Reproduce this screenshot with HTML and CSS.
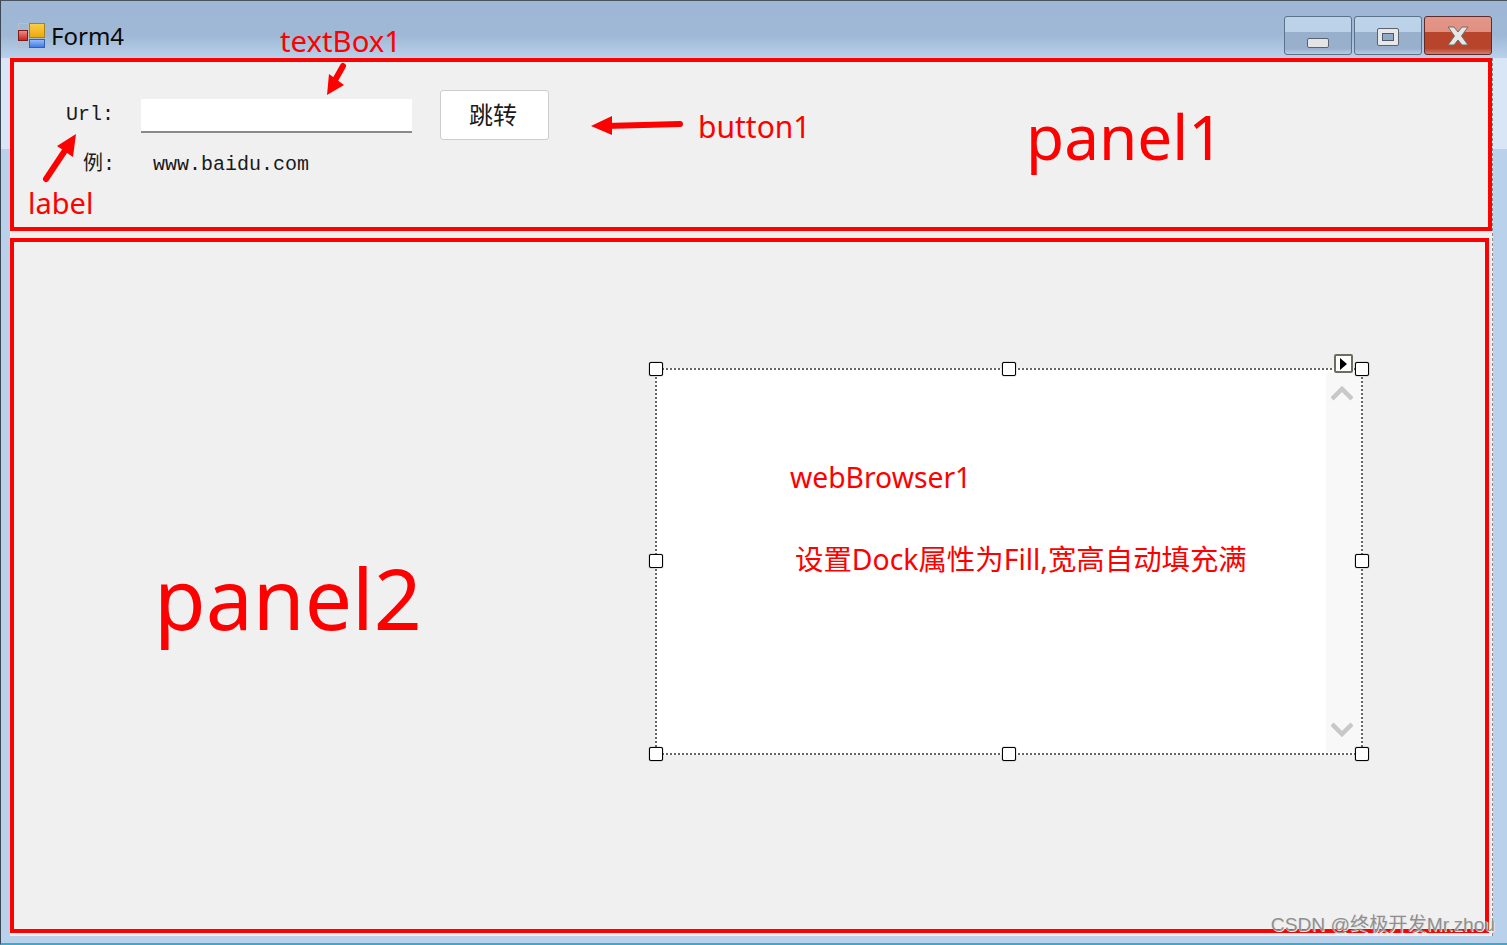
FILE: index.html
```html
<!DOCTYPE html>
<html lang="en">
<head>
  <meta charset="UTF-8" />
  <title>Form4</title>
  <link rel="stylesheet" href="styles.css">
</head>
<body>

  <div class="window">
    <div class="titlebar">
      <svg class="app-icon" width="28" height="26" viewBox="0 0 28 26">
        <defs>
          <linearGradient id="iconRed" x1="0" y1="0" x2="0" y2="1"><stop offset="0" stop-color="#f09088"/><stop offset="1" stop-color="#c8201c"/></linearGradient>
          <linearGradient id="iconYellow" x1="0" y1="0" x2="0" y2="1"><stop offset="0" stop-color="#f8d048"/><stop offset="1" stop-color="#eca80c"/></linearGradient>
          <linearGradient id="iconBlue" x1="0" y1="0" x2="0" y2="1"><stop offset="0" stop-color="#98c0fa"/><stop offset="1" stop-color="#3f78e6"/></linearGradient>
        </defs>
        <path d="M1.500 1.500H11.500V25.500H1.500ZM1.500 8.500H11.500M1.500 18.500H11.500M6.500 18.500V25.500" fill="none" stroke="#b9bec6"/>
        <rect x="1.5" y="8.5" width="9" height="10" fill="url(#iconRed)" stroke="#7c1d1a"/>
        <rect x="12.5" y="1.5" width="15" height="14" fill="url(#iconYellow)" stroke="#a8801c"/>
        <rect x="12.5" y="17.5" width="15" height="8" fill="url(#iconBlue)" stroke="#3a5ea8"/>
      </svg>
      <div class="title">Form4</div>
      <div class="caption-buttons">
        <div class="caption-btn">
          <div class="min-glyph"></div>
        </div>
        <div class="caption-btn">
          <div class="max-glyph"><div class="max-inner"></div></div>
        </div>
        <div class="caption-btn close">
          <svg width="24" height="20" viewBox="0 0 24 20">
            <path d="M2 1H8L12 6L16 1H22L15.500 10L22 19H16L12 14L8 19H2L8.500 10Z" fill="#e6e6e6" stroke="#6d6a6a"/>
          </svg>
        </div>
      </div>
    </div>

    <div class="client">
      <div class="panel panel1">
        <div class="form-row">
          <div class="lbl lbl-url">Url:</div>
          <div class="textbox"></div>
          <div class="btn">跳转</div>
        </div>
        <div class="form-row row-example">
          <div class="lbl lbl-eg">例:</div>
          <div class="lbl lbl-site">www.baidu.com</div>
        </div>
      </div>

      <div class="panel panel2">
        <div class="browser">
          <div class="browser-page"></div>
          <div class="scrollbar">
            <svg width="22" height="16" viewBox="0 0 22 16"><path d="M1 14L11 4L21 14" fill="none" stroke="#c8c8c8" stroke-width="4.500"/></svg>
            <svg width="22" height="16" viewBox="0 0 22 16"><path d="M1 2L11 12L21 2" fill="none" stroke="#c8c8c8" stroke-width="4.500"/></svg>
          </div>
          <div class="handle h-tl"></div>
          <div class="handle h-tc"></div>
          <div class="handle h-tr"></div>
          <div class="handle h-ml"></div>
          <div class="handle h-mr"></div>
          <div class="handle h-bl"></div>
          <div class="handle h-bc"></div>
          <div class="handle h-br"></div>
          <div class="smart-tag"><div class="smart-arrow"></div></div>
        </div>
      </div>
    </div>

    <!-- red notes drawn over the form -->
    <svg class="arrows" width="1507" height="945" viewBox="0 0 1507 945">
      <path d="M343 66L334 82" stroke="#fe0000" stroke-width="6" stroke-linecap="round"/>
      <path d="M327 95L329 74L344 85Z" fill="#fe0000"/>
      <path d="M46 179L66 149" stroke="#fe0000" stroke-width="6" stroke-linecap="round"/>
      <path d="M76 134L73 157L57 146Z" fill="#fe0000"/>
      <path d="M680 124L606 126" stroke="#fe0000" stroke-width="6" stroke-linecap="round"/>
      <path d="M591 126L612 116L612 135Z" fill="#fe0000"/>
    </svg>
    <div class="note n-textbox">textBox1</div>
    <div class="note n-label">label</div>
    <div class="note n-button">button1</div>
    <div class="note n-panel1">panel1</div>
    <div class="note n-panel2">panel2</div>
    <div class="note n-web">webBrowser1</div>
    <div class="note n-dock">设置Dock属性为Fill,宽高自动填充满</div>
    <div class="watermark">CSDN @终极开发Mr.zhou</div>
  </div>

</body>
</html>
```

FILE: styles.css
```css
body {
  margin: 0;
  font-family: "Noto Sans", "Noto Sans CJK SC", sans-serif;
}
.window {
  position: relative;
  width: 1507px;
  height: 945px;
  overflow: hidden;
  box-sizing: border-box;
  border-left: 1px solid #3c4654;
  border-top: 1px solid #4a5260;
  border-bottom: 2px solid #3fa9c9;
  background: linear-gradient(#d9e6f5 0, #d9e6f5 148px, #b9d1ea 148px);
}
.titlebar {
  display: flex;
  align-items: flex-start;
  height: 57px;
  box-sizing: border-box;
  padding: 21px 15px 0 16px;
  background: linear-gradient(#9db7d4 0, #9fb8d5 60%, #b9d1ea 100%);
}
.app-icon {
  flex: none;
}
.title {
  margin-left: 6px;
  font-size: 24px;
  line-height: 27px;
  color: #0a0a0a;
}
.caption-buttons {
  display: flex;
  gap: 2px;
  margin-left: auto;
  margin-top: -6px;
}
.caption-btn {
  display: flex;
  align-items: center;
  justify-content: center;
  width: 68px;
  height: 39px;
  box-sizing: border-box;
  border: 1px solid #5d7188;
  border-radius: 3px;
  background: linear-gradient(#bdd3e9 0, #bcd2e8 40%, #98b0cc 41%, #98b0cc 85%, #b6cce3 100%);
}
.caption-btn.close {
  border-color: #5e2a2a;
  background: linear-gradient(#e3978a 0, #df9080 40%, #b8452b 41%, #b8452b 85%, #d08070 100%);
}
.min-glyph {
  width: 22px;
  height: 10px;
  margin-top: 14px;
  box-sizing: border-box;
  border: 1px solid #5a6270;
  border-radius: 2px;
  background: #e4e4e4;
}
.max-glyph {
  display: flex;
  align-items: center;
  justify-content: center;
  width: 22px;
  height: 18px;
  margin-top: 3px;
  box-sizing: border-box;
  border: 1px solid #5a6270;
  border-radius: 2px;
  background: #e8e8e8;
}
.max-inner {
  width: 10px;
  height: 6px;
  border: 1px solid #4d5a6e;
  background: #8fa9c7;
}
.client {
  display: flex;
  flex-direction: column;
  gap: 7px;
  width: 1483px;
  height: 878px;
  margin-left: 9px;
  box-sizing: border-box;
  border-right: 1px dashed #888;
  background: #f0f0f0;
}
.panel {
  box-sizing: border-box;
  border: 4px solid #fe0000;
}
.panel1 {
  width: 1482px;
  height: 173px;
  padding-top: 28px;
}
.panel2 {
  width: 1479px;
  height: 695px;
  padding: 126px 0 0 641px;
}
.form-row {
  display: flex;
  align-items: center;
}
.row-example {
  margin-top: 13px;
}
.lbl {
  font-family: "Liberation Mono", "Noto Sans CJK SC", monospace;
  font-size: 20px;
  line-height: 24px;
  color: #1a1a1a;
}
.lbl-url {
  width: 48px;
  margin-left: 52px;
}
.lbl-eg {
  width: 36px;
  margin-left: 69px;
}
.lbl-site {
  margin-left: 34px;
}
.textbox {
  width: 271px;
  height: 34px;
  margin-top: 2px;
  margin-left: 27px;
  box-sizing: border-box;
  background: #fff;
  border-bottom: 2px solid #8a8a8a;
}
.btn {
  width: 109px;
  height: 50px;
  margin-left: 28px;
  padding-right: 3px;
  box-sizing: border-box;
  border: 1px solid #cdcdcd;
  border-radius: 3px;
  background: #fff;
  font-family: "Noto Sans CJK SC", sans-serif;
  font-size: 24px;
  line-height: 46px;
  text-align: center;
  color: #1a1a1a;
}
.browser {
  position: relative;
  display: flex;
  width: 708px;
  height: 387px;
  box-sizing: border-box;
  border: 2px dotted #666;
  background: #fff;
}
.browser-page {
  flex: 1;
}
.scrollbar {
  display: flex;
  flex-direction: column;
  align-items: center;
  justify-content: space-between;
  width: 35px;
  margin: 3px 0 1px;
  padding: 12px 3px 14px 0;
  box-sizing: border-box;
  background: #f8f8f8;
}
.handle {
  position: absolute;
  width: 14px;
  height: 14px;
  box-sizing: border-box;
  border: 1px solid #000;
  border-radius: 2px;
  background: #fff;
  box-shadow: 0 0 1px #000;
}
.h-tl { left: -8px; top: -8px; }
.h-tc { left: 345px; top: -8px; }
.h-tr { right: -8px; top: -8px; }
.h-ml { left: -8px; top: 184px; }
.h-mr { right: -8px; top: 184px; }
.h-bl { left: -8px; bottom: -8px; }
.h-bc { left: 345px; bottom: -8px; }
.h-br { right: -8px; bottom: -8px; }
.smart-tag {
  position: absolute;
  right: 8px;
  top: -16px;
  display: flex;
  align-items: center;
  justify-content: center;
  width: 19px;
  height: 19px;
  box-sizing: border-box;
  border: 2px solid #6f6c60;
  border-radius: 2px;
  background: #fff;
}
.smart-arrow {
  width: 0;
  height: 0;
  border-left: 7px solid #000;
  border-top: 6px solid transparent;
  border-bottom: 6px solid transparent;
}
.arrows {
  position: absolute;
  left: -1px;
  top: -1px;
}
.note {
  position: absolute;
  color: #fe0000;
  white-space: nowrap;
  line-height: 1;
}
.n-textbox { left: 279px; top: 26px; font-size: 29.3px; }
.n-label { left: 27px; top: 187px; font-size: 29px; }
.n-button { left: 697px; top: 111px; font-size: 30px; }
.n-panel1 { left: 1025px; top: 104px; font-size: 62px; }
.n-panel2 { left: 153px; top: 555px; font-size: 84px; }
.n-web { left: 789px; top: 462px; font-size: 28.300px; }
.n-dock { left: 794px; top: 544px; font-size: 28.400px; }
.watermark {
  position: absolute;
  right: 12px;
  top: 914px;
  font-family: "Liberation Sans", "Noto Sans CJK SC", sans-serif;
  font-size: 19.200px;
  line-height: 20px;
  color: #8f8f8f;
  text-shadow: 1px 1px 0 #e4e4e4;
  white-space: nowrap;
}
```
